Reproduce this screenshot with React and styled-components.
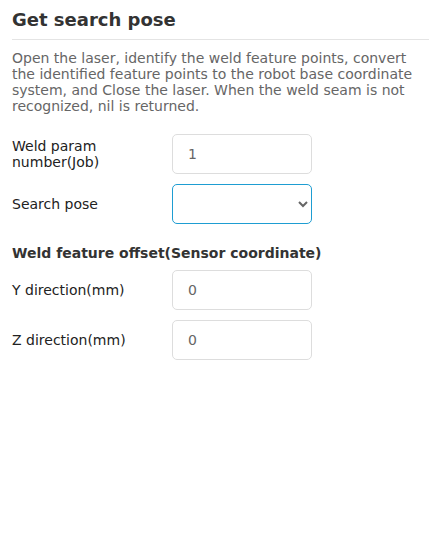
import React from "react";
import styled, { createGlobalStyle } from "styled-components";

const Global = createGlobalStyle`
  html, body { margin: 0; padding: 0; background: #fff; }
  body { font-family: "DejaVu Sans", sans-serif; }
  * { box-sizing: border-box; }
`;

const Page = styled.div`
  padding: 9px 4px 0 12px;
  font-family: "DejaVu Sans", sans-serif;
`;

const Title = styled.h1`
  margin: 0;
  font-size: 18px;
  font-weight: bold;
  color: #333;
  line-height: 22px;
  padding-bottom: 8px;
  border-bottom: 1px solid #e4e4e4;
`;

const Desc = styled.p`
  margin: 10px 0 0;
  font-size: 14px;
  line-height: 16px;
  color: #666;
`;

const Form = styled.div`
  margin-top: 20px;
  display: flex;
  flex-direction: column;
  gap: 10px;
`;

const Row = styled.div`
  display: grid;
  grid-template-columns: 160px 140px;
  align-items: center;
`;

const Label = styled.label`
  font-size: 14px;
  line-height: 16px;
  color: #222;
  padding-right: 20px;
`;

const Input = styled.input`
  width: 140px;
  height: 40px;
  border: 1px solid #dddddd;
  border-radius: 5px;
  padding: 0 15px;
  font-family: "DejaVu Sans", sans-serif;
  font-size: 14px;
  color: #666;
  outline: none;
  background: #fff;
`;

const Select = styled.select`
  width: 140px;
  height: 40px;
  border: 1px solid #1e9dd2;
  border-radius: 5px;
  padding: 0 6px 0 15px;
  font-family: "DejaVu Sans", sans-serif;
  font-size: 14px;
  color: #666;
  background: #fff;
  outline: none;
`;

const Section = styled.h2`
  margin: 11px 0 -1px;
  font-size: 14px;
  line-height: 16px;
  font-weight: bold;
  color: #333;
`;

export default function App() {
  return (
    <>
      <Global />
      <Page>
        <Title>Get search pose</Title>
        <Desc>
          Open the laser, identify the weld feature points, convert the identified feature points to the robot base coordinate system, and Close the laser. When the weld seam is not recognized, nil is returned.
        </Desc>
        <Form>
          <Row>
            <Label>Weld param number(Job)</Label>
            <Input defaultValue="1" />
          </Row>
          <Row>
            <Label>Search pose</Label>
            <Select defaultValue="">
              <option value=""></option>
            </Select>
          </Row>
          <Section>Weld feature offset(Sensor coordinate)</Section>
          <Row>
            <Label>Y direction(mm)</Label>
            <Input defaultValue="0" />
          </Row>
          <Row>
            <Label>Z direction(mm)</Label>
            <Input defaultValue="0" />
          </Row>
        </Form>
      </Page>
    </>
  );
}
